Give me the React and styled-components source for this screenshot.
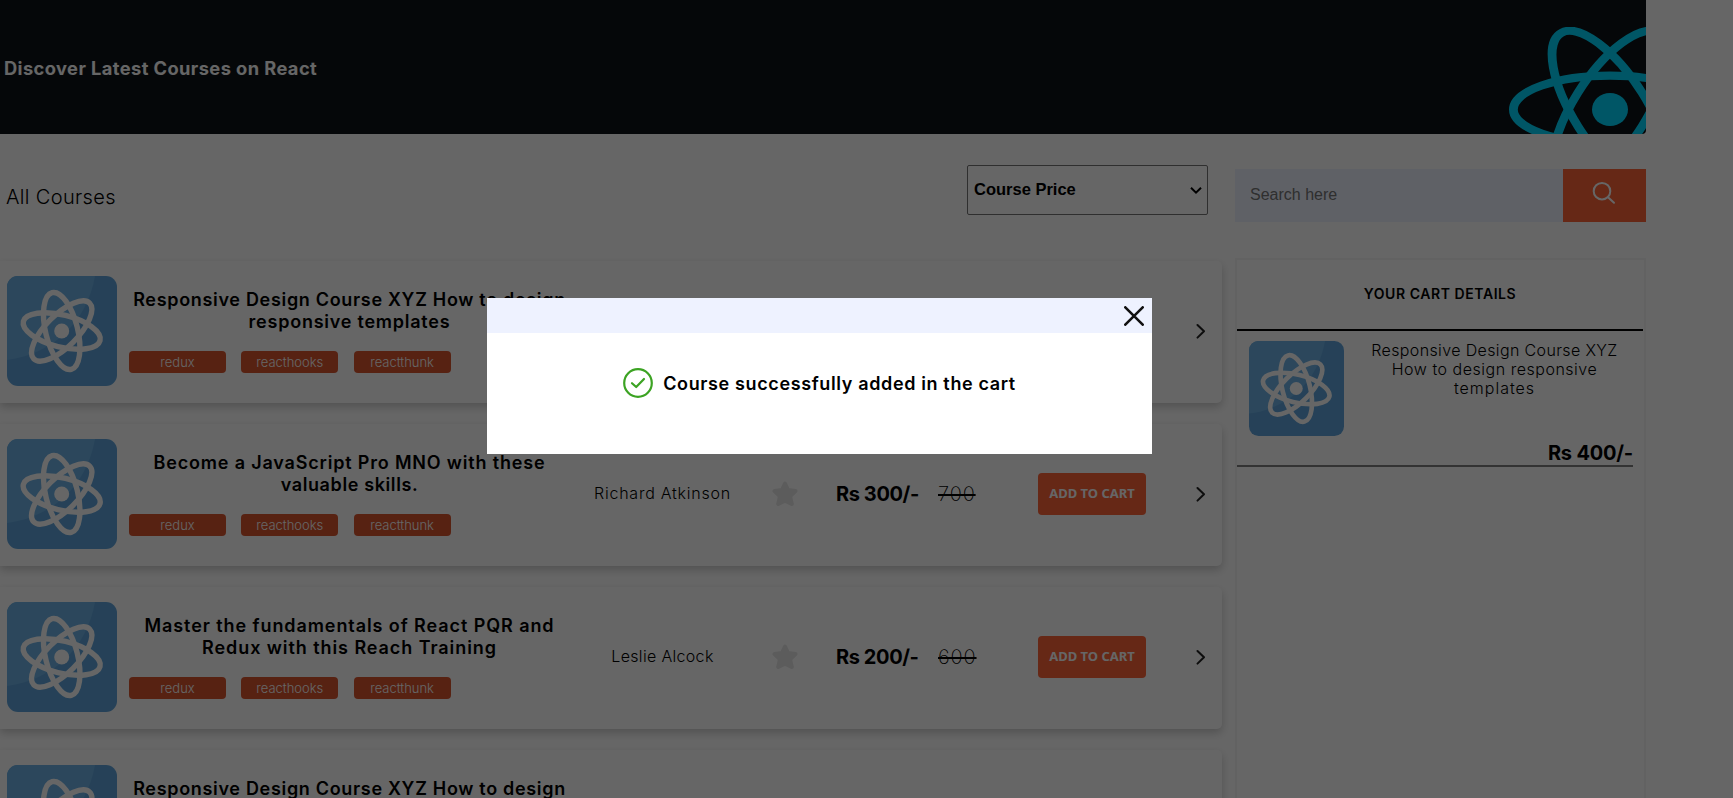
import React from 'react';
import styled, { createGlobalStyle } from 'styled-components';

const GlobalStyle = createGlobalStyle`
  * { box-sizing: border-box; }
  body {
    margin: 0;
    background: #fff;
    color: #000;
    font-family: Inter, "Liberation Sans", sans-serif;
    overflow: hidden;
  }
`;

const Page = styled.div`
  position: relative;
  width: 100%;
  height: 100vh;
  overflow: hidden;
`;

const Banner = styled.header`
  display: flex;
  align-items: center;
  justify-content: space-between;
  width: 1646px;
  height: 134px;
  padding-left: 4px;
  overflow: hidden;
  background: #0d1217;
  border-radius: 0 0 4px 0;
`;

const BannerTitle = styled.h4`
  margin: 2px 0 0;
  font-size: 18.3px;
  line-height: 22px;
  font-weight: 700;
  letter-spacing: 0.41px;
  color: #fff;
`;

const BannerLogo = styled.svg`
  flex: none;
  align-self: flex-start;
  width: 202px;
  height: 165px;
  margin: 26.5px -65px 0 0;
`;

const Content = styled.main`
  display: flex;
  align-items: flex-start;
  gap: 13px;
`;

const CoursesColumn = styled.section`
  width: 1222px;
`;

const Toolbar = styled.div`
  display: flex;
  align-items: flex-start;
  justify-content: space-between;
  height: 127px;
  padding: 31px 14px 0 6px;
`;

const Heading = styled.div`
  margin-top: 20px;
  font-size: 20px;
  line-height: 24px;
  font-weight: 300;
  letter-spacing: 0.35px;
`;

const SelectWrap = styled.div`
  position: relative;
`;

const PriceSelect = styled.select`
  appearance: none;
  display: block;
  width: 241px;
  height: 50px;
  padding: 0 24px 2px 6px;
  border: 1px solid #767676;
  border-radius: 2px;
  background: #fff;
  color: #000;
  font: 700 16.5px "Liberation Sans", Arial, sans-serif;
`;

const SelectArrow = styled.svg`
  position: absolute;
  right: 6px;
  top: 21px;
  width: 12px;
  height: 9px;
  pointer-events: none;
`;

const CourseList = styled.div`
  display: flex;
  flex-direction: column;
  gap: 21px;
`;

const Card = styled.article`
  display: flex;
  align-items: center;
  height: 142px;
  padding: 15px 0 17px 7px;
  border-radius: 0 5px 5px 0;
  background: #fff;
  box-shadow: 0 4px 8px rgba(0, 0, 0, 0.2);
`;

const Thumb = styled.svg`
  flex: none;
  display: block;
  width: ${(p) => p.$size}px;
  height: ${(p) => p.$size}px;
`;

const Info = styled.div`
  align-self: flex-start;
  flex: none;
  width: 440px;
  margin-left: 12px;
  padding-top: 13px;
`;

const CourseTitle = styled.h3`
  margin: 0;
  padding-left: 1px;
  font-size: 18px;
  line-height: 22px;
  font-weight: 600;
  text-align: center;
`;

const Line = styled.span`
  display: block;
  white-space: nowrap;
  letter-spacing: ${(p) => p.$track}px;
`;

const Tags = styled.div`
  display: flex;
  gap: 15.3px;
  margin-top: 18px;
`;

const Tag = styled.span`
  width: 97px;
  height: 22px;
  border-radius: 4px;
  background: #da552f;
  color: #fff;
  font-size: 13px;
  line-height: 22px;
  font-weight: 300;
  text-align: center;
`;

const Author = styled.div`
  flex: none;
  width: 186px;
  padding: 0 0 2px 1px;
  font-size: 16px;
  line-height: 20px;
  font-weight: 300;
  text-align: center;
`;

const StarIcon = styled.svg`
  flex: none;
  width: 26px;
  height: 26px;
  margin: 0 17px;
`;

const Prices = styled.div`
  display: flex;
  flex: none;
  align-items: center;
  width: 223px;
  padding-left: 21px;
  font-size: 20px;
  line-height: 24px;
`;

const Price = styled.span`
  width: 102px;
  font-weight: 700;
  letter-spacing: -0.4px;
`;

const OldPrice = styled.span`
  font-weight: 200;
  letter-spacing: 0.9px;
  text-decoration: line-through;
`;

const AddButton = styled.button`
  flex: none;
  width: 108px;
  height: 42px;
  padding: 0 0 2px;
  border: 0;
  border-radius: 4px;
  background: #ff6438;
  color: #fff;
  font: 700 13px "Noto Sans", "Open Sans", sans-serif;
`;

const Chevron = styled.svg`
  flex: none;
  width: 12px;
  height: 16px;
  margin-left: 49px;
`;

const SideColumn = styled.aside`
  width: 411px;
  padding-top: 35px;
`;

const SearchBar = styled.div`
  display: flex;
  height: 53px;
`;

const SearchInput = styled.input`
  flex: 1;
  min-width: 0;
  padding: 0 15px 1px;
  border: 0;
  background: #eef2ff;
  font: 400 16px "Liberation Sans", Arial, sans-serif;
  &::placeholder { color: #757575; opacity: 1; }
`;

const SearchButton = styled.button`
  display: flex;
  align-items: center;
  justify-content: center;
  width: 83px;
  padding: 0 1px 5px 0;
  border: 0;
  background: #ff6438;
`;

const Cart = styled.div`
  height: 640px;
  margin-top: 36px;
  border: 2px solid #f5f5f5;
`;

const CartHead = styled.div`
  height: 71px;
  margin-right: 1px;
  border-bottom: 2px solid #000;
  font-size: 14px;
  line-height: 67px;
  font-weight: 600;
  text-align: center;
  letter-spacing: 0.57px;
`;

const CartItem = styled.div`
  width: 396px;
  padding-top: 10px;
  border-bottom: 2px solid #808080;
`;

const CartItemBody = styled.div`
  display: flex;
  padding-left: 12px;
`;

const CartItemTitle = styled.div`
  flex: none;
  width: 301px;
  font-size: 16px;
  line-height: 19px;
  font-weight: 300;
  text-align: center;
`;

const CartItemPrice = styled.div`
  margin-top: 5px;
  font-size: 20px;
  line-height: 24px;
  font-weight: 700;
  text-align: right;
  letter-spacing: -0.2px;
`;

const Overlay = styled.div`
  position: fixed;
  inset: 0;
  background: rgba(0, 0, 0, 0.6);
`;

const Modal = styled.div`
  position: absolute;
  left: 487px;
  top: 298px;
  width: 665px;
  height: 156px;
  background: #fff;
`;

const ModalHead = styled.div`
  display: flex;
  align-items: center;
  justify-content: flex-end;
  height: 35px;
  padding: 1px 8px 0;
  background: #eef2ff;
`;

const ModalBody = styled.div`
  display: flex;
  align-items: center;
  justify-content: center;
  gap: 10px;
  height: 100px;
`;

const ModalText = styled.span`
  padding-top: 2px;
  font-size: 18px;
  line-height: 22px;
  font-weight: 600;
  letter-spacing: 0.63px;
`;

function ReactThumb({ size }) {
  return (
    <Thumb $size={size} viewBox="0 0 110 110">
      <rect width="110" height="110" rx="11" fill="#5fa4dc" />
      <path d="M11 0H88C80 46 46 78 0 84V11A11 11 0 0 1 11 0Z" fill="#6eb2e6" />
      <g transform="translate(54.7 55)" fill="none" stroke="#fff" strokeWidth="5.4">
        <ellipse rx="39.5" ry="16" transform="rotate(14)" />
        <ellipse rx="39.5" ry="16" transform="rotate(76)" />
        <ellipse rx="39.5" ry="16" transform="rotate(135)" />
        <circle r="7.5" fill="#fff" stroke="none" />
      </g>
    </Thumb>
  );
}

const courses = [
  {
    title: [['Responsive Design Course XYZ How to design', 0.683], ['responsive templates', 0.762]],
    author: ['Richard Atkinson', 0.752], price: 'Rs 400/-', old: '800',
  },
  {
    title: [['Become a JavaScript Pro MNO with these', 0.821], ['valuable skills.', 0.611]],
    author: ['Richard Atkinson', 0.752], price: 'Rs 300/-', old: '700',
  },
  {
    title: [['Master the fundamentals of React PQR and', 0.918], ['Redux with this Reach Training', 0.928]],
    author: ['Leslie Alcock', 0.322], price: 'Rs 200/-', old: '600',
  },
  {
    title: [['Responsive Design Course XYZ How to design', 0.683], ['responsive templates', 0.762]],
    author: ['Leslie Alcock', 0.322], price: 'Rs 400/-', old: '800',
  },
];

const tags = ['redux', 'reacthooks', 'reactthunk'];

function CourseCard({ course }) {
  return (
    <Card>
      <ReactThumb size={110} />
      <Info>
        <CourseTitle>
          {course.title.map(([text, track]) => <Line key={text} $track={track}>{text}</Line>)}
        </CourseTitle>
        <Tags>{tags.map((t) => <Tag key={t}>{t}</Tag>)}</Tags>
      </Info>
      <Author><Line $track={course.author[1]}>{course.author[0]}</Line></Author>
      <StarIcon viewBox="0 0 26 26">
        <path
          d="M13 2.5 16 9 23.5 10 18 15.2 19.8 23 13 19.7 6.2 23 8 15.2 2.5 10 10 9Z"
          fill="#e6e6e6" stroke="#e6e6e6" strokeWidth="4" strokeLinejoin="round"
        />
      </StarIcon>
      <Prices>
        <Price>{course.price}</Price>
        <OldPrice>{course.old}</OldPrice>
      </Prices>
      <AddButton>ADD TO CART</AddButton>
      <Chevron viewBox="0 0 12 16" fill="none" stroke="#222" strokeWidth="2" strokeLinecap="round" strokeLinejoin="round">
        <path d="M2.5 2 9 8.3 2.5 14.6" />
      </Chevron>
    </Card>
  );
}

export default function App() {
  return (
    <Page>
      <GlobalStyle />
      <Banner>
        <BannerTitle>Discover Latest Courses on React</BannerTitle>
        <BannerLogo viewBox="-11.5 -10.23174 23 20.46348" preserveAspectRatio="none">
          <circle r="2.05" fill="#00d8ff" />
          <g fill="none" stroke="#00d8ff" strokeWidth="1">
            <ellipse rx="11" ry="4.2" />
            <ellipse rx="11" ry="4.2" transform="rotate(60)" />
            <ellipse rx="11" ry="4.2" transform="rotate(120)" />
          </g>
        </BannerLogo>
      </Banner>
      <Content>
        <CoursesColumn>
          <Toolbar>
            <Heading>All Courses</Heading>
            <SelectWrap>
              <PriceSelect defaultValue="price">
                <option value="price">Course Price</option>
              </PriceSelect>
              <SelectArrow viewBox="0 0 12 9" fill="none" stroke="#000" strokeWidth="2">
                <path d="M1 1.7 6 6.7 11 1.7" />
              </SelectArrow>
            </SelectWrap>
          </Toolbar>
          <CourseList>
            {courses.map((c, i) => <CourseCard key={i} course={c} />)}
          </CourseList>
        </CoursesColumn>
        <SideColumn>
          <SearchBar>
            <SearchInput placeholder="Search here" />
            <SearchButton aria-label="Search">
              <svg width="24" height="24" viewBox="0 0 24 24" fill="none" stroke="#fff" strokeWidth="2" strokeLinecap="round">
                <circle cx="10" cy="10.2" r="8.3" />
                <path d="M16 16.2 22 21.8" />
              </svg>
            </SearchButton>
          </SearchBar>
          <Cart>
            <CartHead>YOUR CART DETAILS</CartHead>
            <CartItem>
              <CartItemBody>
                <ReactThumb size={95} />
                <CartItemTitle>
                  <Line $track={0.363}>Responsive Design Course XYZ</Line>
                  <Line $track={0.519}>How to design responsive</Line>
                  <Line $track={1}>templates</Line>
                </CartItemTitle>
              </CartItemBody>
              <CartItemPrice>Rs 400/-</CartItemPrice>
            </CartItem>
          </Cart>
        </SideColumn>
      </Content>
      <Overlay>
        <Modal role="dialog">
          <ModalHead>
            <svg width="20" height="20" viewBox="0 0 20 20" stroke="#111" strokeWidth="2.6" strokeLinecap="round">
              <path d="M1.3 1.3 18.7 18.7M18.7 1.3 1.3 18.7" />
            </svg>
          </ModalHead>
          <ModalBody>
            <svg width="30" height="30" viewBox="0 0 30 30" fill="none" stroke="#3ca323" strokeWidth="2.2" strokeLinecap="round" strokeLinejoin="round">
              <circle cx="15" cy="15" r="13.8" />
              <path d="M9 15.2 13.2 19 21 11" />
            </svg>
            <ModalText>Course successfully added in the cart</ModalText>
          </ModalBody>
        </Modal>
      </Overlay>
    </Page>
  );
}
